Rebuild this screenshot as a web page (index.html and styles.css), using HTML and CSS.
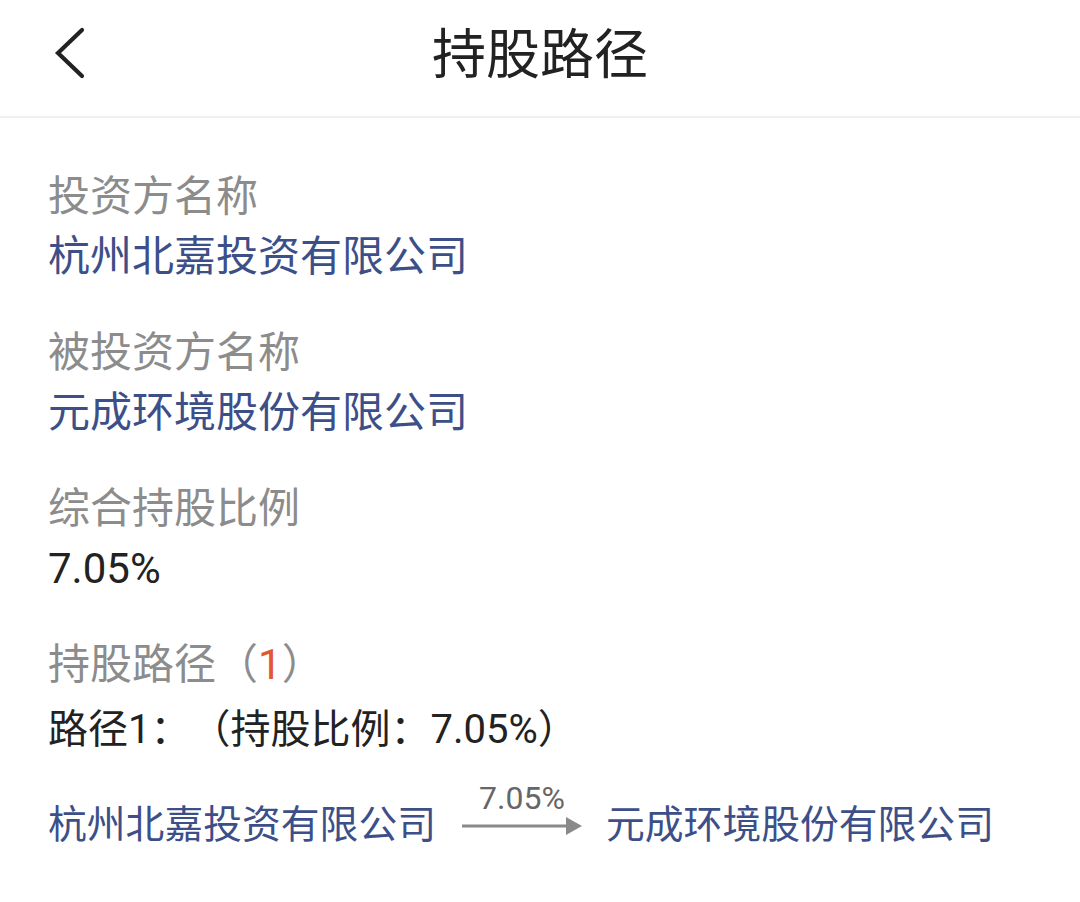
FILE: index.html
```html
<!DOCTYPE html>
<html lang="zh-CN">
<head>
<meta charset="utf-8">
<title>持股路径</title>
<link rel="stylesheet" href="styles.css">
</head>
<body>
<header class="topbar">
  <span class="back">
    <svg width="40" height="60" viewBox="0 0 40 60"><polyline points="32,8 8,31 32,54" fill="none" stroke="#222" stroke-width="4.2" stroke-linecap="round" stroke-linejoin="miter"/></svg>
  </span>
  <h1 class="title">持股路径</h1>
</header>
<main class="content">
  <section class="group">
    <div class="label">投资方名称</div>
    <div class="value link">杭州北嘉投资有限公司</div>
  </section>
  <section class="group">
    <div class="label">被投资方名称</div>
    <div class="value link">元成环境股份有限公司</div>
  </section>
  <section class="group">
    <div class="label">综合持股比例</div>
    <div class="value">7.05%</div>
  </section>
  <section class="group">
    <div class="label">持股路径（<span class="count">1</span>）</div>
    <div class="path-title">路径1：（持股比例：7.05%）</div>
    <div class="path-row">
      <span class="node">杭州北嘉投资有限公司</span>
      <span class="edge">
        <span class="edge-label">7.05%</span>
        <svg class="edge-arrow" width="120" height="20" viewBox="0 0 120 20"><line x1="0" y1="10" x2="106" y2="10" stroke="#8a8a8a" stroke-width="3"/><polygon points="104,1 120,10 104,19" fill="#8a8a8a"/></svg>
      </span>
      <span class="node">元成环境股份有限公司</span>
    </div>
  </section>
</main>
</body>
</html>
```

FILE: styles.css
```css
* { box-sizing: border-box; }
html, body {
  margin: 0;
  padding: 0;
  background: #ffffff;
  font-family: Roboto, "Noto Sans CJK SC", sans-serif;
  color: #222222;
  text-spacing-trim: space-all;
}
.topbar {
  position: relative;
  height: 118px;
  border-bottom: 2px solid #f0f0f0;
  display: flex;
  align-items: center;
  justify-content: center;
}
.back {
  position: absolute;
  left: 50px;
  top: 22px;
  width: 40px;
  height: 60px;
  display: flex;
}
.title {
  margin: 0;
  font-size: 54px;
  font-weight: 400;
  line-height: 60px;
  color: #222222;
  padding-bottom: 4px;
}
.content {
  padding: 49px 48px 0 48px;
  display: flex;
  flex-direction: column;
  gap: 36px;
}
.group {
  display: flex;
  flex-direction: column;
}
.label {
  font-size: 42px;
  line-height: 60px;
  color: #8c8c8c;
}
.count { color: #e2582f; }
.value {
  font-size: 42px;
  line-height: 60px;
  color: #222222;
}
.link { color: #3d4f88; }
.path-title {
  margin-top: 5px;
  font-size: 40px;
  line-height: 60px;
  color: #222222;
  text-spacing-trim: space-all;
}
.path-row {
  margin-top: 20px;
  display: flex;
  align-items: center;
  height: 90px;
}
.node {
  font-size: 38.8px;
  line-height: 50px;
  color: #3d4f88;
}
.edge {
  display: flex;
  flex-direction: column;
  align-items: center;
  margin: 0 24px 0 26px;
  padding-bottom: 34px;
}
.edge-label {
  font-size: 32px;
  line-height: 36px;
  color: #666666;
}
.edge-arrow { display: block; }
```
